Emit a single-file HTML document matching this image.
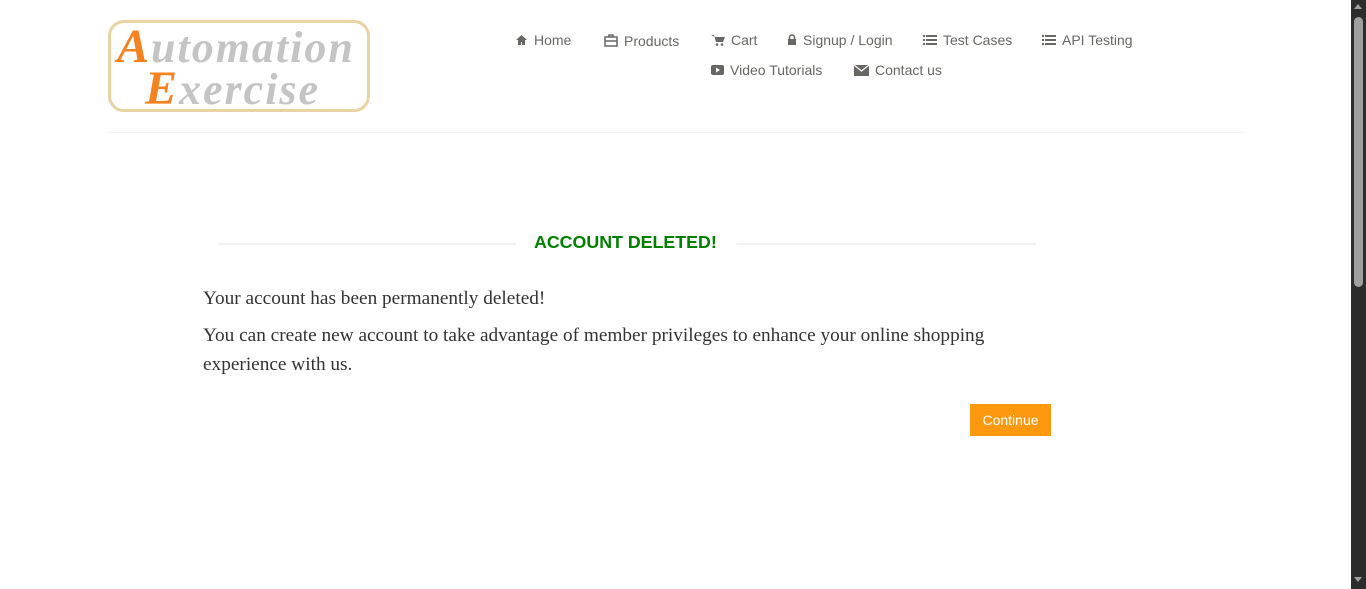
<!DOCTYPE html>
<html><head><meta charset="utf-8"><style>
body{margin:0;width:1366px;height:589px;background:#fff;position:relative;overflow:hidden;font-family:"Liberation Sans",Arial,sans-serif}
.a{position:absolute}
.logo{left:108px;top:20px;width:256px;height:86px;border:3px solid #e8d3a3;border-radius:16px;background:#fff}
.logo span{position:absolute;font-family:"Liberation Serif",serif;font-style:italic;color:#c4c4c4;font-size:44px;letter-spacing:2px;font-weight:bold}
.logo b{color:#f58220;font-size:48px}
.nav{font-size:14px;color:#696763;white-space:nowrap}
.nav svg{vertical-align:-1px;margin-right:6px}
.hr{height:1px;background:#f3f3f3}
.p{font-family:"Liberation Serif",serif;color:#333;font-size:19.3px;line-height:29px}
.sb{left:1351px;top:0;width:15px;height:589px;background:#2c2c2c}
</style></head><body>
<div class="a logo">
<span style="left:6px;top:-4px"><b>A</b>utomation</span>
<span style="left:34px;top:38px"><b>E</b>xercise</span>
</div>
<div class="a nav" style="left:515px;top:32px"><svg width="13" height="12" viewBox="0 0 13 12"><path d="M6.5 1L1 6h2v5h3V8h1v3h3V6h2z" fill="#696763"/></svg>Home</div>
<div class="a nav" style="left:604px;top:33px"><svg width="14" height="13" viewBox="0 0 14 13"><path d="M5 3V1h4v2M1 3h12v9H1zM1 7h12" fill="none" stroke="#696763" stroke-width="1.5"/></svg>Products</div>
<div class="a nav" style="left:711px;top:32px"><svg width="14" height="12" viewBox="0 0 14 12"><path d="M0 1h3l2 7h7l2-5H4" fill="#696763"/><circle cx="6" cy="10.5" r="1.3" fill="#696763"/><circle cx="11" cy="10.5" r="1.3" fill="#696763"/></svg>Cart</div>
<div class="a nav" style="left:787px;top:32px"><svg width="10" height="12" viewBox="0 0 10 12"><path d="M2.5 5V3.5a2.5 2.5 0 015 0V5" fill="none" stroke="#696763" stroke-width="1.6"/><rect x="1" y="5" width="8" height="6" fill="#696763"/></svg>Signup / Login</div>
<div class="a nav" style="left:923px;top:32px"><svg width="14" height="12" viewBox="0 0 14 12"><path d="M0 1h2v2H0zM3 1h11v2H3zM0 5h2v2H0zM3 5h11v2H3zM0 9h2v2H0zM3 9h11v2H3z" fill="#696763"/></svg>Test Cases</div>
<div class="a nav" style="left:1042px;top:32px"><svg width="14" height="12" viewBox="0 0 14 12"><path d="M0 1h2v2H0zM3 1h11v2H3zM0 5h2v2H0zM3 5h11v2H3zM0 9h2v2H0zM3 9h11v2H3z" fill="#696763"/></svg>API Testing</div>
<div class="a nav" style="left:711px;top:62px"><svg width="13" height="12" viewBox="0 0 13 12"><rect x="0" y="1" width="13" height="10" rx="2" fill="#696763"/><path d="M5 3.5v5l4-2.5z" fill="#fff"/></svg>Video Tutorials</div>
<div class="a nav" style="left:854px;top:62px"><svg width="15" height="12" viewBox="0 0 15 12"><rect x="0" y="1" width="15" height="11" fill="#696763"/><path d="M0 1l7.5 6L15 1" fill="none" stroke="#fff" stroke-width="1.2"/></svg>Contact us</div>
<div class="a hr" style="left:107px;top:132px;width:1138px"></div>
<div class="a hr" style="left:218px;top:243px;width:298px;height:2px"></div>
<div class="a hr" style="left:737px;top:243px;width:299px;height:2px"></div>
<div class="a" style="left:534px;top:232px;color:#008000;font-weight:bold;font-size:17.8px">ACCOUNT DELETED!</div>
<div class="a p" style="left:203px;top:284px;width:830px">Your account has been permanently deleted!</div>
<div class="a p" style="left:203px;top:321px;width:830px">You can create new account to take advantage of member privileges to enhance your online shopping experience with us.</div>
<div class="a" style="left:970px;top:404px;width:81px;height:32px;background:#fe980f;color:#fff;font-size:14px;line-height:32px;text-align:center">Continue</div>
<div class="a sb"><div class="a" style="left:3px;top:17px;width:9px;height:270px;background:#9f9f9f;border-radius:5px"></div>
<div class="a" style="left:3px;top:4px;width:0;height:0;border-left:4px solid transparent;border-right:4px solid transparent;border-bottom:5px solid #9f9f9f"></div>
<div class="a" style="left:3px;top:577px;width:0;height:0;border-left:4px solid transparent;border-right:4px solid transparent;border-top:5px solid #9f9f9f"></div></div>
</body></html>
